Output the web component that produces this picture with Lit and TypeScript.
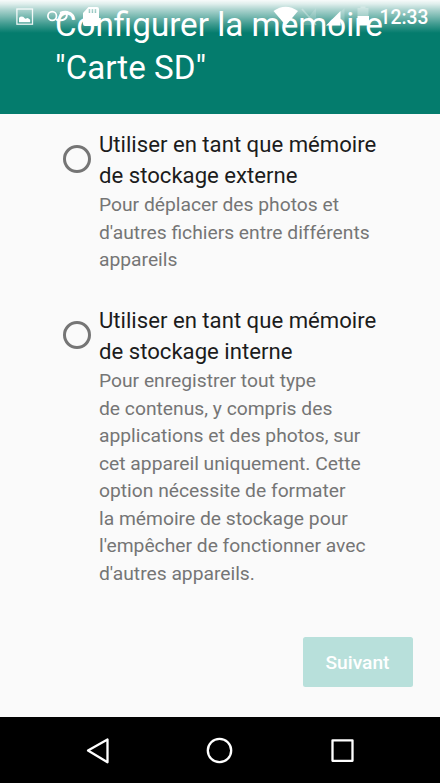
import { LitElement, html, css, svg } from "lit";
import { customElement, property } from "lit/decorators.js";

@customElement("status-bar")
class StatusBar extends LitElement {
  static styles = css`
    :host {
      position: absolute;
      inset: 0 0 auto 0;
      height: 33px;
      background: linear-gradient(
        rgba(255, 255, 255, 0.97) 0,
        rgba(255, 255, 255, 0.87) 4px,
        rgba(255, 255, 255, 0.66) 10px,
        rgba(255, 255, 255, 0.45) 17px,
        rgba(255, 255, 255, 0.24) 24px,
        rgba(255, 255, 255, 0.08) 30px,
        rgba(255, 255, 255, 0) 33px
      );
    }
    .icons {
      display: block;
      width: 440px;
      height: 33px;
    }
    .clock {
      position: absolute;
      right: 11.5px;
      top: 6.5px;
      font-size: 19.3px;
      font-weight: 500;
      line-height: 22px;
      color: #fff;
    }
  `;
  render() {
    return html`
      <svg class="icons" viewBox="0 0 440 33">
        ${svg`
          <rect x="16.9" y="9" width="15.6" height="15.2" fill="none" stroke="#fff" stroke-opacity=".9" stroke-width="1.3"/>
          <path d="M19 22.2v-4.4l1.8-1.3 2.4.2 2 2 2.600-.6 2.400 1.600v2.500z" fill="#fff"/>
          <circle cx="52.2" cy="16" r="4.3" fill="none" stroke="#fff" stroke-width="1.7"/>
          <path d="M56 19.500c5 1.500 9 .5 10.500-2.500 1.200-3-1-5-3.500-4.500-2.500.6-3 2.500-3 4.500M60 12.800c5-2 10.500-1.300 13 2.700 1 1.800.5 3-.5 4" fill="none" stroke="#fff" stroke-width="1.900"/>
          <path fill-rule="evenodd" d="M88.500 7H97q2 0 2 2v15q0 2-2 2H85q-2 0-2-2V13zM88.700 9v4h1.500V9zm3 0v4h1.500V9zm3 0v4h1.500V9z" fill="#fff"/>
          <path d="M273.500 11Q285.500 2.500 298 11L285.800 25.500z" fill="#fff"/>
          <path d="M316 8v17h-14z" fill="#fff" fill-opacity=".16"/>
          <path d="M302 9l14 16" stroke="#fff" stroke-opacity=".3" stroke-width="1.800"/>
          <path d="M344.500 8v17.500H326z" fill="#fff" fill-opacity=".2"/>
          <path d="M340.500 11v14.500h-14.500z" fill="#fff"/>
          <path d="M357.500 8h3V6.500h5V8h3v8h-11z" fill="#fff" fill-opacity=".3"/>
          <path d="M357.500 16h11.500v9.500h-11.500z" fill="#fff"/>
        `}
      </svg>
      <span class="clock">12:33</span>
    `;
  }
}

@customElement("storage-option")
class StorageOption extends LitElement {
  @property({ attribute: false }) heading: string[] = [];
  @property({ attribute: false }) detail: string[] = [];
  static styles = css`
    :host {
      display: flex;
      align-items: flex-start;
      gap: 8px;
    }
    .radio {
      box-sizing: border-box;
      flex: none;
      width: 28px;
      height: 28px;
      margin-top: 15.5px;
      border: 3px solid #757575;
      border-radius: 50%;
    }
    .line {
      display: block;
      white-space: nowrap;
    }
    .heading {
      font-size: 22.15px;
      line-height: 31px;
      color: #1c1c1c;
    }
    .detail {
      font-size: 19.25px;
      line-height: 27.5px;
      color: #757575;
    }
  `;
  render() {
    return html`
      <div class="radio" role="radio" aria-checked="false"></div>
      <div>
        <div class="heading">${this.heading.map((l) => html`<span class="line">${l}</span>`)}</div>
        <div class="detail">${this.detail.map((l) => html`<span class="line">${l}</span>`)}</div>
      </div>
    `;
  }
}

@customElement("app-root")
class AppRoot extends LitElement {
  static styles = css`
    :host {
      display: flex;
      flex-direction: column;
      position: relative;
      width: 440px;
      height: 783px;
      overflow: hidden;
      background: #fafafa;
      font-family: Roboto, sans-serif;
    }
    .header {
      box-sizing: border-box;
      flex: none;
      height: 113.5px;
      padding: 3px 0 0 55px;
      background: #047c6d;
      color: #fff;
      font-size: 33.2px;
      line-height: 43px;
      white-space: nowrap;
    }
    .title {
      display: block;
    }
    .body {
      flex: 1;
      display: flex;
      flex-direction: column;
      gap: 31.5px;
      padding: 15.5px 0 0 63px;
    }
    .footer {
      flex: none;
      display: flex;
      justify-content: flex-end;
      padding: 0 27.5px 30px 0;
    }
    .next {
      width: 110px;
      height: 50px;
      padding: 0;
      border: 0;
      border-radius: 2.5px;
      background: #b8e0db;
      color: #fff;
      font: 500 19.2px/51px Roboto, sans-serif;
    }
    .nav {
      flex: none;
      display: flex;
      align-items: center;
      height: 66px;
      background: #000;
    }
    .nav svg {
      display: block;
      width: 440px;
      height: 66px;
    }
  `;
  render() {
    return html`
      <div class="header">
        <span class="title">Configurer la mémoire</span>
        <span class="title">"Carte SD"</span>
      </div>
      <status-bar></status-bar>
      <div class="body">
        <storage-option
          .heading=${["Utiliser en tant que mémoire", "de stockage externe"]}
          .detail=${["Pour déplacer des photos et", "d'autres fichiers entre différents", "appareils"]}
        ></storage-option>
        <storage-option
          .heading=${["Utiliser en tant que mémoire", "de stockage interne"]}
          .detail=${[
            "Pour enregistrer tout type",
            "de contenus, y compris des",
            "applications et des photos, sur",
            "cet appareil uniquement. Cette",
            "option nécessite de formater",
            "la mémoire de stockage pour",
            "l'empêcher de fonctionner avec",
            "d'autres appareils.",
          ]}
        ></storage-option>
      </div>
      <div class="footer"><button class="next">Suivant</button></div>
      <div class="nav">
        <svg viewBox="0 0 440 66" fill="none" stroke="#fff" stroke-width="2.3" stroke-linejoin="round">
          <path d="M107.500 22.500v22.800L88 33.600z" />
          <circle cx="219.500" cy="33.500" r="11.700" />
          <rect x="332.500" y="23.300" width="20" height="20.500" />
        </svg>
      </div>
    `;
  }
}
